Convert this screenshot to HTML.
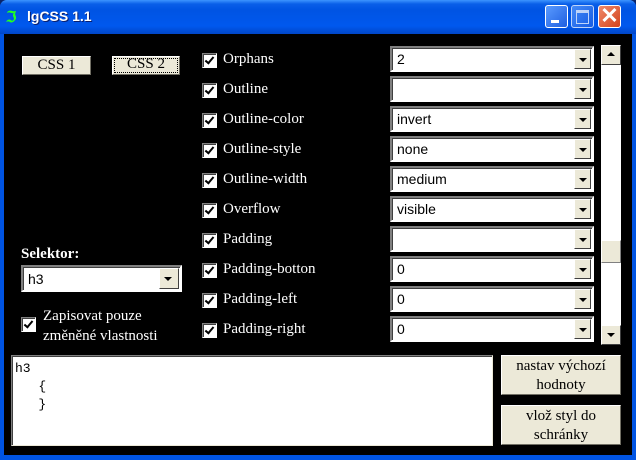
<!DOCTYPE html><html><head><style>
body{margin:0;width:636px;height:460px;overflow:hidden;background:#0a246a;font-family:"Liberation Serif",serif;}
.win{position:absolute;left:0;top:0;width:636px;height:460px;background:#0054e3;border-radius:7px 7px 0 0;}
.title{position:absolute;left:0;top:0;width:636px;height:34px;border-radius:7px 7px 0 0;background:linear-gradient(#3d95ff 0,#0a5fe8 4px,#0054e3 10px,#0058ee 26px,#0046c8 34px);}
.ttext{position:absolute;left:27px;top:8px;color:#fff;font:bold 14px "Liberation Sans",sans-serif;text-shadow:1px 1px #0a1f6e;}
.tb{position:absolute;top:5px;width:21px;height:21px;border:1px solid #fff;border-radius:3px;background:linear-gradient(135deg,#5a9bff,#1f5fe0);}
.client{position:absolute;left:4px;top:34px;width:628px;height:421px;background:#000;}
.a{position:absolute;}
.btn{position:absolute;background:#ece9d8;border:1px solid;border-color:#fff #716f64 #716f64 #fff;box-shadow:1px 1px 0 #000;font-size:15px;text-align:center;color:#000;box-sizing:border-box;}
.cb{position:absolute;width:13px;height:13px;background:#fff;border:1px solid;border-color:#808080 #fff #fff #808080;box-shadow:inset 1px 1px #404040;}
.cb:after{content:"";position:absolute;left:4px;top:1px;width:3px;height:7px;border:solid #000;border-width:0 2px 2px 0;transform:rotate(40deg);}
.lbl{position:absolute;color:#fff;font-size:15px;}
.combo{position:absolute;background:#fff;border:2px solid;border-color:#808080 #fff #fff #808080;box-sizing:border-box;box-shadow:inset 1px 1px #404040;font:14px "Liberation Sans",sans-serif;}
.combo span{position:absolute;left:5px;top:3px;}
.dd{position:absolute;right:1px;top:1px;bottom:1px;width:17px;background:#ece9d8;border:1px solid;border-color:#fff #404040 #404040 #fff;box-sizing:border-box;}
.dd:after{content:"";position:absolute;left:4px;top:8px;border:4px solid transparent;border-top:4px solid #000;border-bottom:0;}
</style></head><body><div class="win">
<div class="title">
<div class="a" style="left:6px;top:8px;color:#2f2;font:bold 15px 'Liberation Sans';">ℑ</div>
<div class="ttext">lgCSS 1.1</div>
<div class="tb" style="left:545px"><div class="a" style="left:5px;top:14px;width:8px;height:3px;background:#fff"></div></div>
<div class="tb" style="left:571px;opacity:.75"><div class="a" style="left:4px;top:4px;width:11px;height:10px;border:1px solid #fff;border-top-width:3px"></div></div>
<div class="tb" style="left:598px;background:linear-gradient(135deg,#f08a6b,#d2421c)"><div class="a" style="left:0;top:-3px;width:21px;text-align:center;color:#fff;font:bold 22px 'Liberation Sans'">✕</div></div>
</div>
<div class="client"></div>
<div class="btn" style="left:22px;top:56px;width:69px;height:19px;line-height:17px">CSS 1</div>
<div class="btn" style="left:112px;top:56px;width:68px;height:19px;line-height:15px;outline:1px dotted #000;outline-offset:-3px">CSS 2</div>
<div class="lbl" style="left:21px;top:246px;font-weight:bold">Selektor:</div>
<div class="combo" style="left:21px;top:265px;width:161px;height:27px"><span style="top:4px">h3</span><div class="dd" style="width:20px"></div></div>
<div class="cb" style="left:21px;top:317px"></div>
<div class="lbl" style="left:43px;top:306px;line-height:20px">Zapisovat pouze<br>změněné vlastnosti</div>

<div class="cb" style="left:202px;top:53px"></div><div class="lbl" style="left:223px;top:51px">Orphans</div><div class="combo" style="left:390px;top:46px;width:204px;height:26px"><span>2</span><div class="dd"></div></div>
<div class="cb" style="left:202px;top:83px"></div><div class="lbl" style="left:223px;top:81px">Outline</div><div class="combo" style="left:390px;top:76px;width:204px;height:26px"><span></span><div class="dd"></div></div>
<div class="cb" style="left:202px;top:113px"></div><div class="lbl" style="left:223px;top:111px">Outline-color</div><div class="combo" style="left:390px;top:106px;width:204px;height:26px"><span>invert</span><div class="dd"></div></div>
<div class="cb" style="left:202px;top:143px"></div><div class="lbl" style="left:223px;top:141px">Outline-style</div><div class="combo" style="left:390px;top:136px;width:204px;height:26px"><span>none</span><div class="dd"></div></div>
<div class="cb" style="left:202px;top:173px"></div><div class="lbl" style="left:223px;top:171px">Outline-width</div><div class="combo" style="left:390px;top:166px;width:204px;height:26px"><span>medium</span><div class="dd"></div></div>
<div class="cb" style="left:202px;top:203px"></div><div class="lbl" style="left:223px;top:201px">Overflow</div><div class="combo" style="left:390px;top:196px;width:204px;height:26px"><span>visible</span><div class="dd"></div></div>
<div class="cb" style="left:202px;top:233px"></div><div class="lbl" style="left:223px;top:231px">Padding</div><div class="combo" style="left:390px;top:226px;width:204px;height:26px"><span></span><div class="dd"></div></div>
<div class="cb" style="left:202px;top:263px"></div><div class="lbl" style="left:223px;top:261px">Padding-botton</div><div class="combo" style="left:390px;top:256px;width:204px;height:26px"><span>0</span><div class="dd"></div></div>
<div class="cb" style="left:202px;top:293px"></div><div class="lbl" style="left:223px;top:291px">Padding-left</div><div class="combo" style="left:390px;top:286px;width:204px;height:26px"><span>0</span><div class="dd"></div></div>
<div class="cb" style="left:202px;top:323px"></div><div class="lbl" style="left:223px;top:321px">Padding-right</div><div class="combo" style="left:390px;top:316px;width:204px;height:26px"><span>0</span><div class="dd"></div></div>

<div class="a" style="left:601px;top:45px;width:20px;height:300px;background:#fff"></div>
<div class="a" style="left:601px;top:45px;width:20px;height:20px;background:#ece9d8;border:1px solid;border-color:#fff #404040 #404040 #fff;box-sizing:border-box"><div class="a" style="left:5px;top:6px;border:4px solid transparent;border-bottom:4px solid #000;border-top:0"></div></div>
<div class="a" style="left:601px;top:325px;width:20px;height:20px;background:#ece9d8;border:1px solid;border-color:#fff #404040 #404040 #fff;box-sizing:border-box"><div class="a" style="left:5px;top:7px;border:4px solid transparent;border-top:4px solid #000;border-bottom:0"></div></div>
<div class="a" style="left:601px;top:240px;width:20px;height:23px;background:#ece9d8;border:1px solid;border-color:#fff #808080 #808080 #fff;box-sizing:border-box"></div>

<div class="a" style="left:11px;top:355px;width:482px;height:91px;background:#fff;border:1px solid;border-color:#808080 #ece9d8 #ece9d8 #808080;box-sizing:border-box;box-shadow:inset 1px 1px #404040;font:13px 'Liberation Mono',monospace;padding:4px 3px;line-height:18px;white-space:pre">h3
   {
   }</div>
<div class="btn" style="left:501px;top:355px;width:120px;height:40px;line-height:19px;padding-top:1px">nastav výchozí<br>hodnoty</div>
<div class="btn" style="left:501px;top:405px;width:120px;height:40px;line-height:19px;padding-top:1px">vlož styl do<br>schránky</div>
</div></body></html>
